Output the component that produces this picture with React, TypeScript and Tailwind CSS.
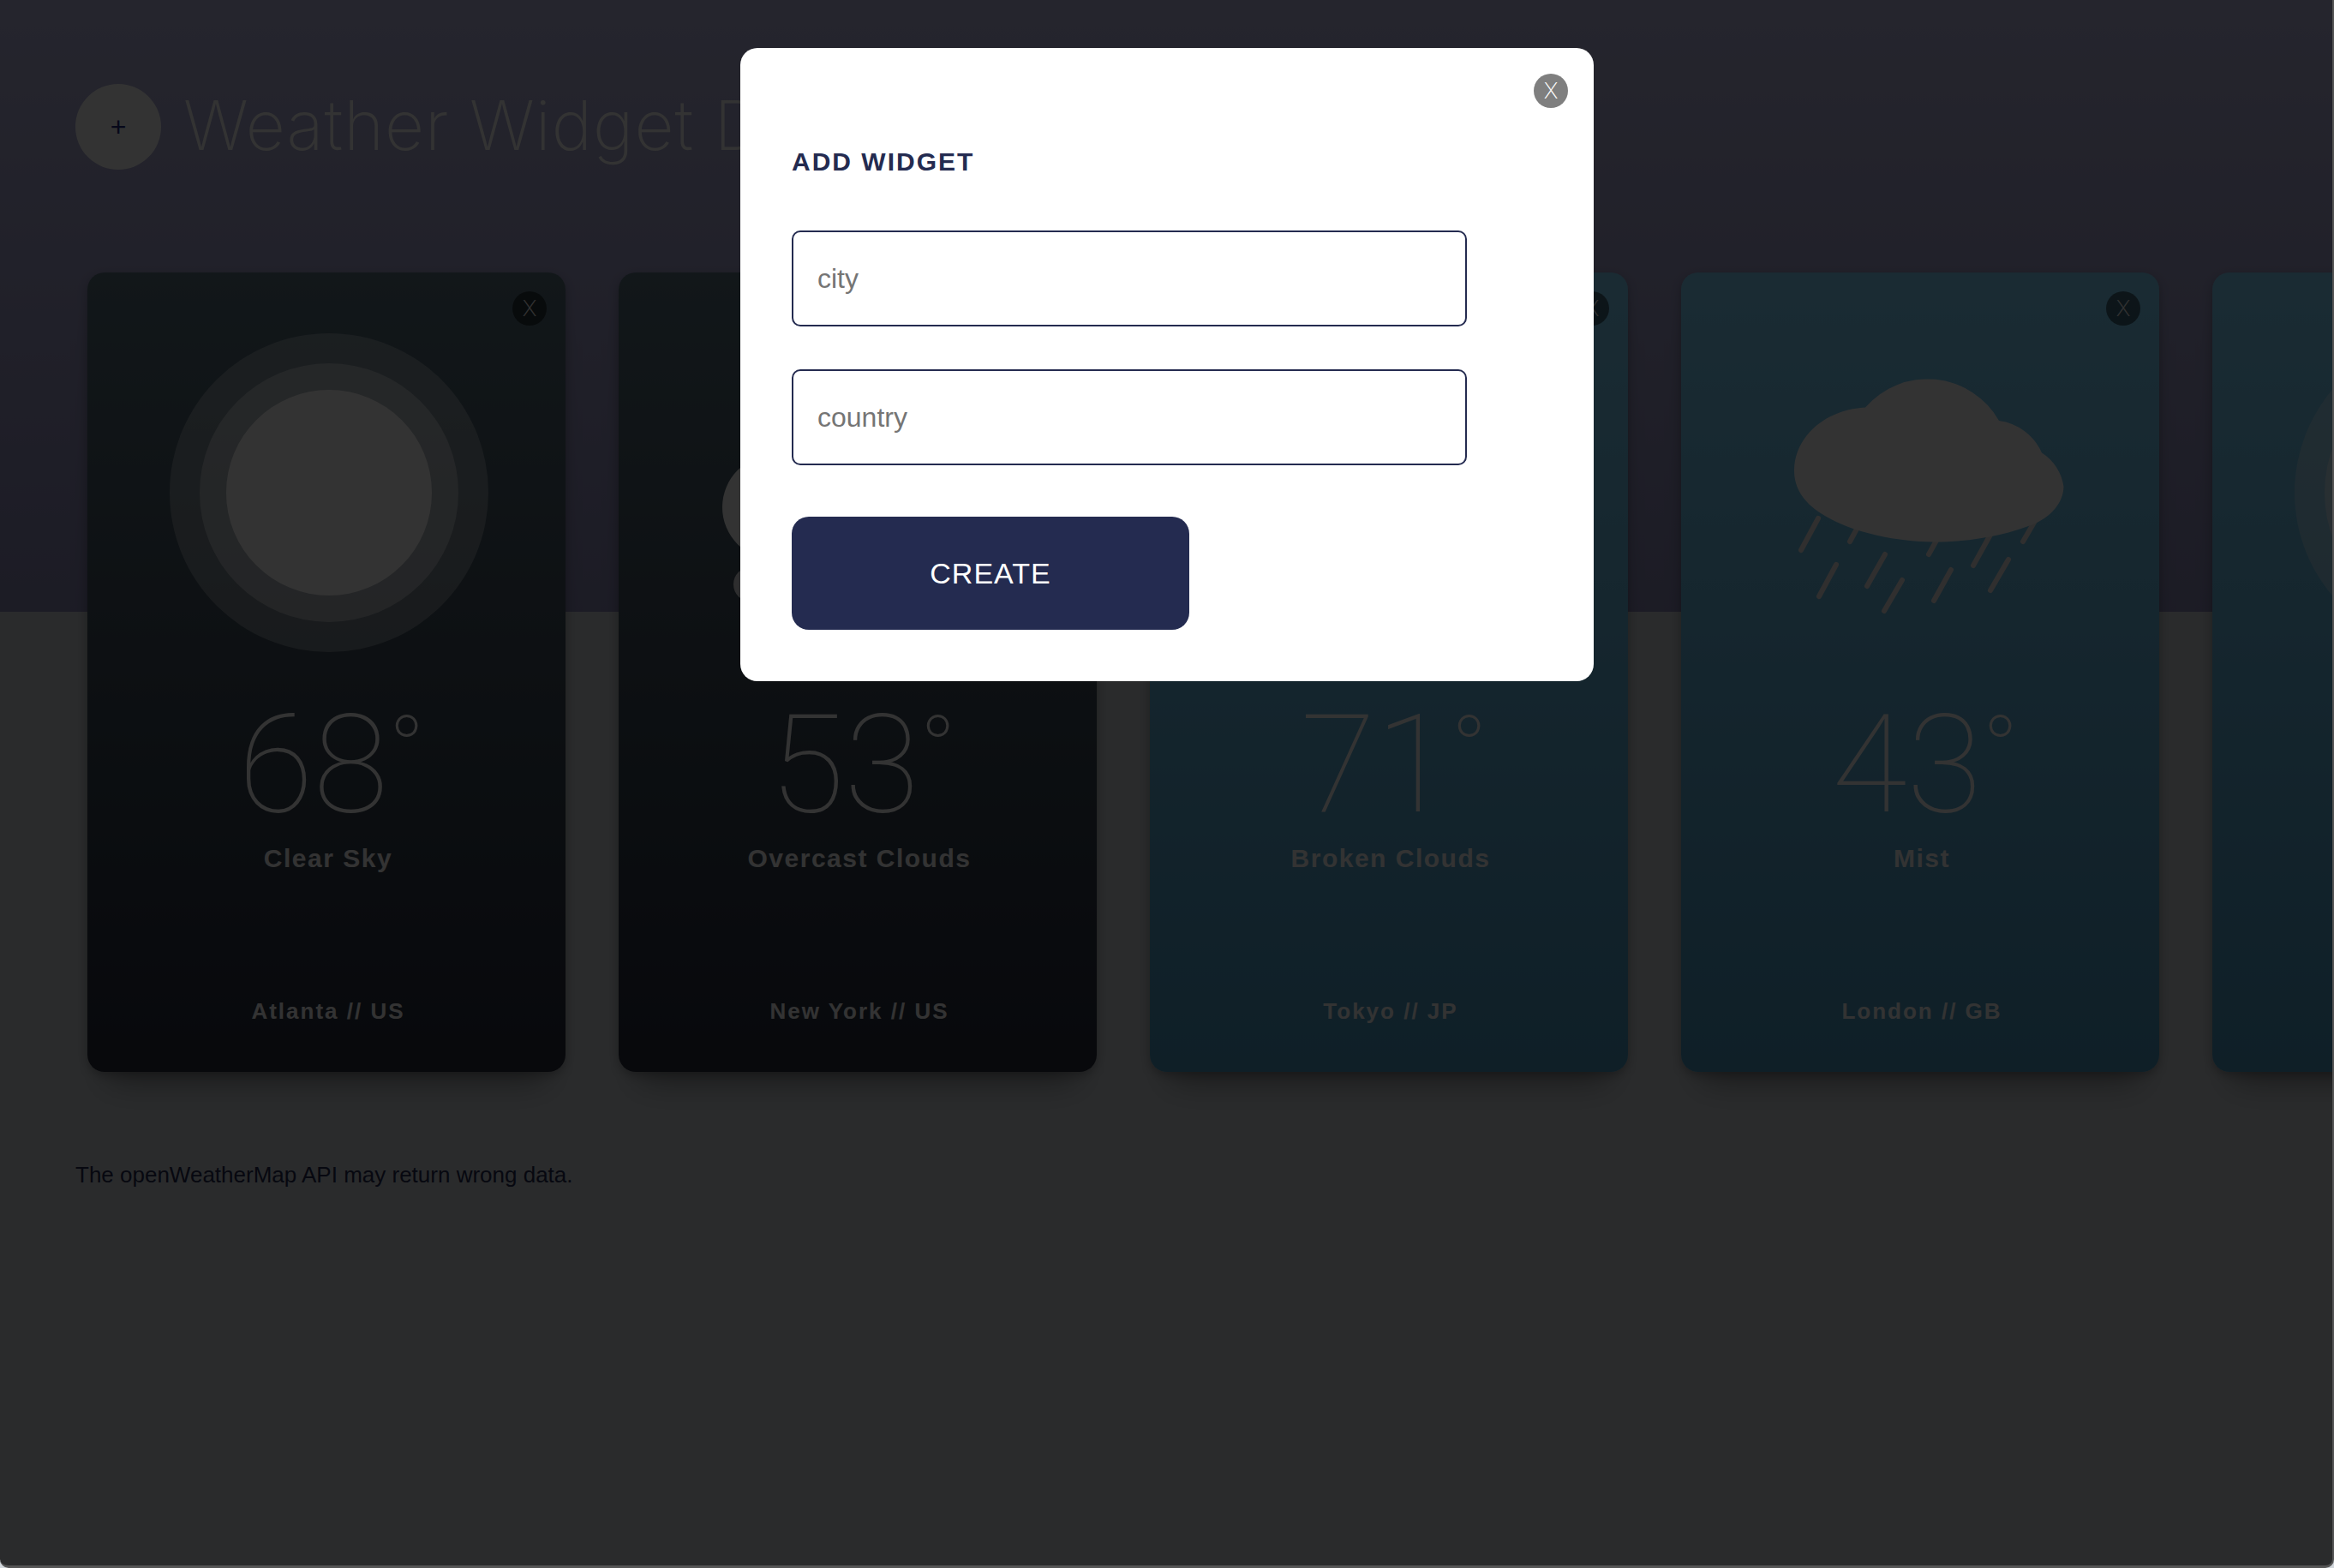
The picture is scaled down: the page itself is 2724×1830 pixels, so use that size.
import React from "react";

type Sky = "sun" | "clouds" | "rain";

type Widget = {
  temp: number;
  summary: string;
  place: string;
  sky: Sky;
  night: boolean;
};

const widgets: Widget[] = [
  { temp: 68, summary: "Clear Sky", place: "Atlanta // US", sky: "sun", night: true },
  { temp: 53, summary: "Overcast Clouds", place: "New York // US", sky: "clouds", night: true },
  { temp: 71, summary: "Broken Clouds", place: "Tokyo // JP", sky: "clouds", night: false },
  { temp: 43, summary: "Mist", place: "London // GB", sky: "rain", night: false },
  { temp: 75, summary: "Clear Sky", place: "Madrid // ES", sky: "sun", night: false },
];

const drops: [number, number, number, number][] = [
  [160, 287, 140, 324],
  [209, 292, 197, 314],
  [238, 329, 217, 366],
  [181, 341, 161, 378],
  [258, 359, 237, 395],
  [304, 302, 289, 329],
  [361, 306, 341, 342],
  [315, 347, 295, 383],
  [382, 335, 361, 371],
  [413, 290, 399, 314],
];

function SkyIcon({ sky }: { sky: Sky }) {
  return (
    <svg viewBox="0 0 558 500" className="block w-full" aria-hidden="true">
      {sky === "sun" && (
        <g fill="#fff">
          <circle cx="282" cy="257" r="186" opacity="0.3" />
          <circle cx="282" cy="257" r="151" opacity="0.42" />
          <circle cx="282" cy="257" r="120" />
        </g>
      )}
      {sky === "clouds" && (
        <g fill="#fff">
          <circle cx="182" cy="274" r="61" />
          <circle cx="260" cy="220" r="85" />
          <circle cx="350" cy="265" r="70" />
          <rect x="182" y="265" width="168" height="70" rx="20" />
          <rect x="134" y="344" width="230" height="40" rx="20" opacity="0.85" />
        </g>
      )}
      {sky === "rain" && (
        <g>
          <g stroke="#fff0ea" strokeOpacity="0.88" strokeWidth="6" strokeLinecap="round">
            {drops.map(([x1, y1, x2, y2]) => (
              <line key={x1} x1={x1} y1={y1} x2={x2} y2={y2} />
            ))}
          </g>
          <path
            fill="#fff"
            d="M215 157.500A96 96 0 0 1 371 173A64 64 0 0 1 421 210.500A56 56 0 0 1 446.500 250C446 268 433 284 413 293C380 307 336 314.500 296 314.500C240 314 190 299 163 281C143 268 132 252 132 231C132 192 168 160 215 157.500Z"
          />
        </g>
      )}
    </svg>
  );
}

function CloseButton({ label }: { label: string }) {
  return (
    <button
      type="button"
      aria-label={label}
      className="flex size-10 items-center justify-center rounded-full bg-black/50 font-['Inter'] text-[26px] leading-none font-extralight text-white"
    >
      X
    </button>
  );
}

function WeatherCard({ widget }: { widget: Widget }) {
  return (
    <article
      className={
        "relative h-[933px] w-[558px] shrink-0 rounded-[20px] text-center text-white shadow-[0_36px_36px_-24px_rgba(0,0,0,0.35),0_4px_12px_rgba(0,0,0,0.25)] " +
        (widget.night
          ? "bg-[linear-gradient(#5a7380,#282d3c)]"
          : "bg-[linear-gradient(#82d7ff,#4b9bc3)]")
      }
    >
      <div className="absolute top-[22px] right-[22px]">
        <CloseButton label={"Remove " + widget.place} />
      </div>
      <SkyIcon sky={widget.sky} />
      <p className="flex items-start justify-center pl-3 font-['Roboto'] leading-[150px] font-thin">
        <span className="text-[160px]">{widget.temp}</span>
        <span className="text-[112px] leading-[116px]">°</span>
      </p>
      <p className="mt-4 pl-1 text-[30px] leading-9 font-bold tracking-wider">{widget.summary}</p>
      <p className="mt-[144px] pl-1 text-[26px] leading-8 font-bold tracking-[2px]">{widget.place}</p>
    </article>
  );
}

function Field({ id, name }: { id: string; name: string }) {
  return (
    <input
      id={id}
      type="text"
      aria-label={name}
      placeholder={name}
      className="h-28 w-[90%] rounded-[10px] border-2 border-[#242b50] bg-white px-7 text-[32px] text-[#242b50] outline-none placeholder:text-[#757575]"
    />
  );
}

export default function App() {
  return (
    <div className="min-h-screen overflow-hidden bg-[linear-gradient(#b9b9e1,#8c8ab9_714px,#d2d7dc_714px)] font-['Liberation_Sans',Arial,sans-serif]">
      <header className="flex items-start gap-[26px] px-[88px] pt-[98px]">
        <button
          type="button"
          aria-label="Add widget"
          className="flex size-[100px] shrink-0 items-center justify-center rounded-full bg-white text-[32px] text-[#242b80]"
        >
          +
        </button>
        <h1 className="font-['Inter'] text-[80px] leading-[96px] font-extralight tracking-[1px] whitespace-nowrap text-white">
          Weather Widget Dashboard
        </h1>
      </header>

      <main className="mt-[120px] flex gap-[62px] pl-[102px]">
        {widgets.map((widget) => (
          <WeatherCard key={widget.place} widget={widget} />
        ))}
      </main>

      <footer className="mt-[104px] px-[88px] text-[26px] leading-8 text-[#242b50]">
        The openWeatherMap API may return wrong data.
      </footer>

      <div className="fixed inset-0 flex items-start justify-center rounded-b-[10px] border-r-2 border-b-[3px] border-[#555] bg-black/80 pt-14">
        <section
          role="dialog"
          aria-labelledby="dialog-title"
          className="relative ml-[2px] w-[996px] rounded-[20px] bg-white px-[60px] pt-[115px] pb-[60px]"
        >
          <div className="absolute top-[30px] right-[30px]">
            <CloseButton label="Close" />
          </div>
          <h2 id="dialog-title" className="text-[30px] leading-9 font-bold tracking-[2px] text-[#242b50]">
            ADD WIDGET
          </h2>
          <form className="mt-[62px] flex flex-col items-start">
            <Field id="city" name="city" />
            <div className="mt-[50px] w-full">
              <Field id="country" name="country" />
            </div>
            <button
              type="button"
              className="mt-[60px] h-[132px] w-[464px] rounded-[20px] bg-[#242b50] text-[34px] tracking-[1px] text-white"
            >
              CREATE
            </button>
          </form>
        </section>
      </div>
    </div>
  );
}
